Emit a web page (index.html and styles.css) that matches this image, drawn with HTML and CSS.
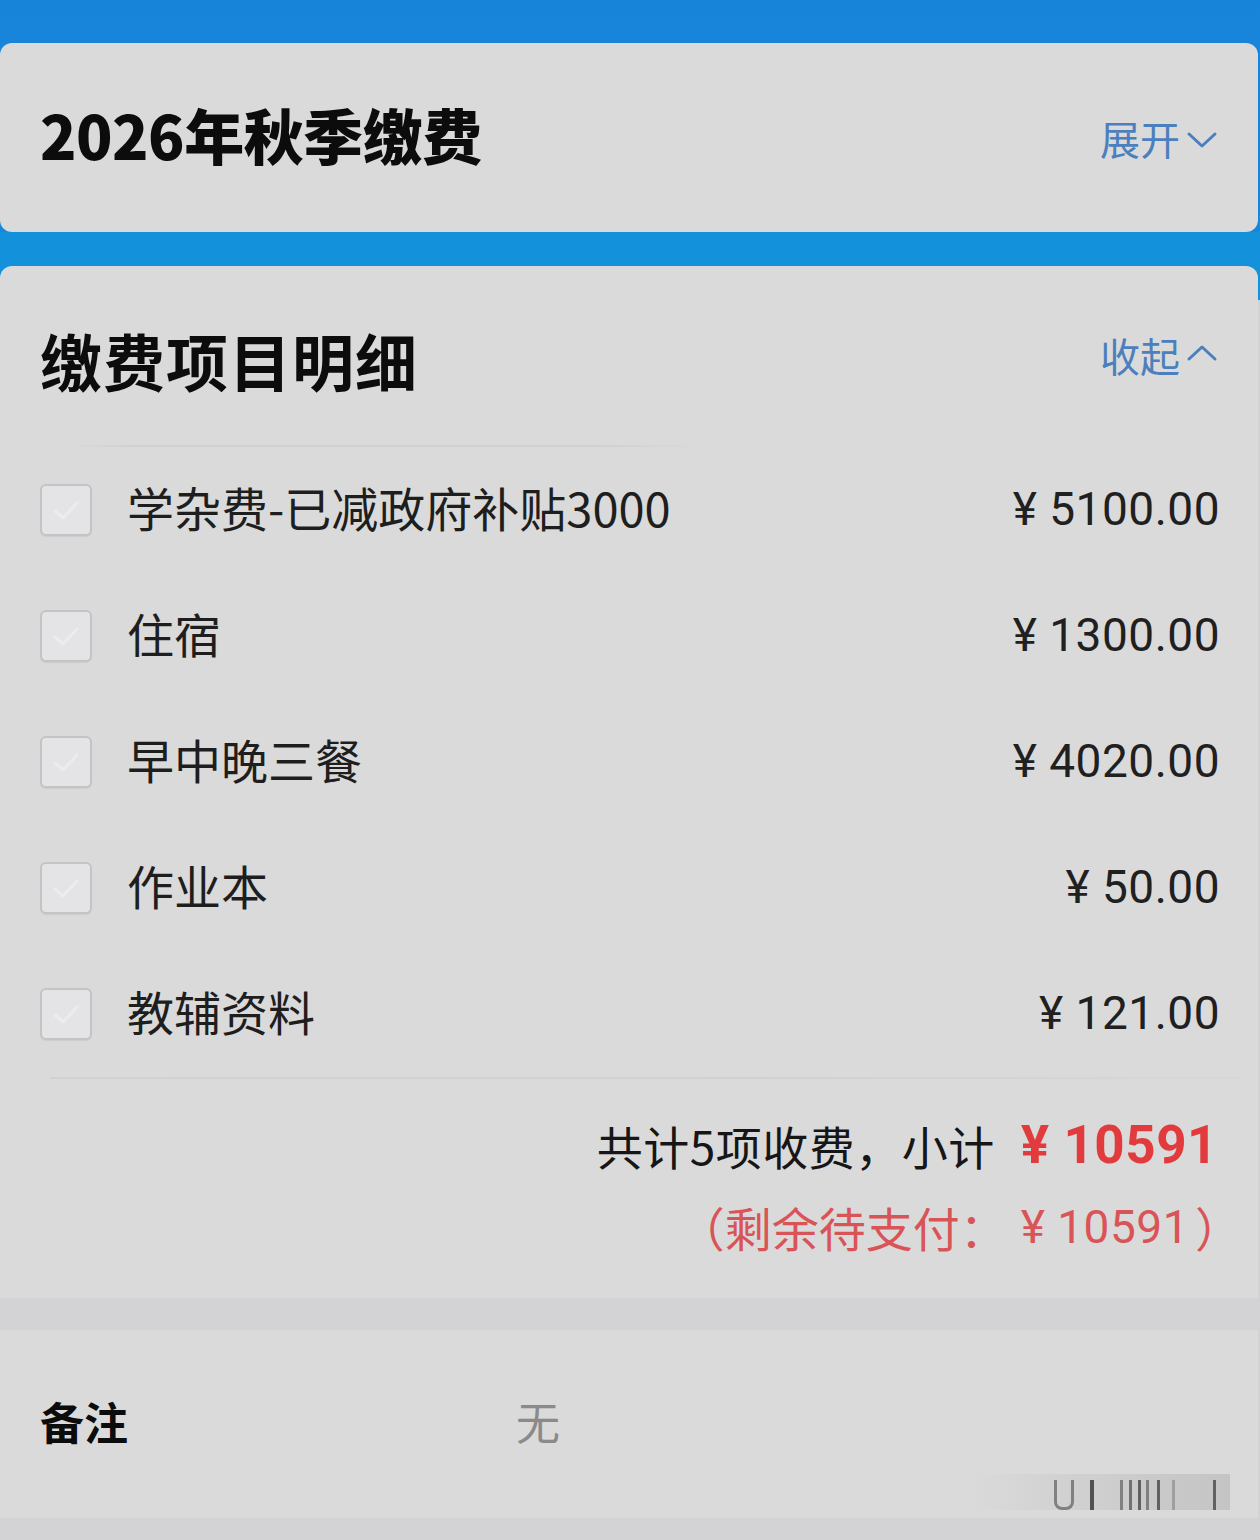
FILE: index.html
```html
<!DOCTYPE html>
<html lang="zh-CN">
<head>
<meta charset="utf-8">
<title>2026年秋季缴费</title>
<link rel="stylesheet" href="styles.css">
</head>
<body>
<div class="page">
  <section class="card card-head">
    <h1 class="title title-year">2026年秋季缴费</h1>
    <div class="toggle">展开<svg class="chev" viewBox="0 0 32 20" width="32" height="20"><path d="M3 4 L16 16 L29 4" fill="none" stroke="currentColor" stroke-width="3" stroke-linecap="round" stroke-linejoin="round"/></svg></div>
  </section>

  <section class="card card-detail">
    <div class="detail-head">
      <h2 class="title title-detail">缴费项目明细</h2>
      <div class="toggle toggle-up">收起<svg class="chev" viewBox="0 0 32 20" width="32" height="20"><path d="M3 16 L16 4 L29 16" fill="none" stroke="currentColor" stroke-width="3" stroke-linecap="round" stroke-linejoin="round"/></svg></div>
    </div>
    <div class="divider divider-top"></div>
    <ul class="items">
      <li class="item"><span class="check"><svg viewBox="0 0 52 52" width="52" height="52"><path d="M15 27 L23 34 L37 19" fill="none" stroke="#ececee" stroke-width="3" stroke-linecap="round" stroke-linejoin="round"/></svg></span><span class="name">学杂费-已减政府补贴3000</span><span class="amount">¥ 5100.00</span></li>
      <li class="item"><span class="check"><svg viewBox="0 0 52 52" width="52" height="52"><path d="M15 27 L23 34 L37 19" fill="none" stroke="#ececee" stroke-width="3" stroke-linecap="round" stroke-linejoin="round"/></svg></span><span class="name">住宿</span><span class="amount">¥ 1300.00</span></li>
      <li class="item"><span class="check"><svg viewBox="0 0 52 52" width="52" height="52"><path d="M15 27 L23 34 L37 19" fill="none" stroke="#ececee" stroke-width="3" stroke-linecap="round" stroke-linejoin="round"/></svg></span><span class="name">早中晚三餐</span><span class="amount">¥ 4020.00</span></li>
      <li class="item"><span class="check"><svg viewBox="0 0 52 52" width="52" height="52"><path d="M15 27 L23 34 L37 19" fill="none" stroke="#ececee" stroke-width="3" stroke-linecap="round" stroke-linejoin="round"/></svg></span><span class="name">作业本</span><span class="amount">¥ 50.00</span></li>
      <li class="item"><span class="check"><svg viewBox="0 0 52 52" width="52" height="52"><path d="M15 27 L23 34 L37 19" fill="none" stroke="#ececee" stroke-width="3" stroke-linecap="round" stroke-linejoin="round"/></svg></span><span class="name">教辅资料</span><span class="amount">¥ 121.00</span></li>
    </ul>
    <div class="divider divider-bottom"></div>
    <div class="totals">
      <div class="total-line">共计5项收费，小计<span class="total-sum">¥ 10591</span></div>
      <div class="remain">（剩余待支付：<span class="remain-num">¥ 10591</span>）</div>
    </div>
  </section>

  <section class="card card-note">
    <span class="note-label">备注</span>
    <span class="note-value">无</span>
    <div class="watermark" aria-hidden="true">
      <span class="wm-u"></span><span class="wm-bar b1"></span><span class="wm-bar b2"></span><span class="wm-bar b3"></span><span class="wm-bar b4"></span><span class="wm-bar b5"></span><span class="wm-bar b6"></span><span class="wm-bar b7"></span><span class="wm-bar b8"></span>
    </div>
  </section>
</div>
</body>
</html>
```

FILE: styles.css
```css
html, body {
  margin: 0;
  padding: 0;
}

body {
  width: 1260px;
  min-height: 1540px;
  background: linear-gradient(to bottom, #1784d9 0, #1787d9 232px, #1491db 232px, #1491db 300px, #d3d3d5 300px);
  font-family: "Noto Sans CJK SC", "Noto Sans", sans-serif;
  color: #1c1c1c;
}

.page {
  display: flex;
  flex-direction: column;
  width: 1258px;
  padding-top: 43px;
}

.card {
  background: #dadada;
  border-radius: 12px;
  box-sizing: border-box;
  padding: 0 40px;
}

.card-head {
  height: 189px;
  display: flex;
  align-items: center;
  justify-content: space-between;
}

.title {
  margin: 0;
  font-weight: 700;
  color: #0c0c0c;
}

.title-year {
  font-size: 60px;
  line-height: 70px;
  font-weight: 900;
  letter-spacing: -0.5px;
  margin-top: -8px;
}

.toggle {
  display: flex;
  align-items: center;
  gap: 6px;
  font-size: 40px;
  line-height: 50px;
  color: #4c7fbd;
}

.toggle .chev {
  width: 32px;
  height: 20px;
  margin-top: 4px;
}

.toggle-up .chev {
  margin-top: -4px;
}

.card-detail {
  margin-top: 34px;
  height: 1032px;
  border-radius: 12px 12px 0 0;
  display: flex;
  flex-direction: column;
}

.detail-head {
  height: 179px;
  display: flex;
  justify-content: space-between;
  align-items: flex-start;
  padding-top: 60px;
  box-sizing: border-box;
}

.title-detail {
  font-size: 62px;
  line-height: 68px;
  letter-spacing: 1px;
}

.detail-head .toggle {
  margin-top: 4px;
}

.divider {
  height: 2px;
  flex: none;
}

.divider-top {
  margin-left: 30px;
  width: 630px;
  background: linear-gradient(to right, rgba(200,200,200,0), #d0d0d0 10%, #d1d1d1 85%, rgba(200,200,200,0));
}

.divider-bottom {
  margin-left: 10px;
  margin-right: -20px;
  background: linear-gradient(to right, #d2d2d2, #d1d1d1 60%, rgba(210,210,210,0.4));
}

.items {
  list-style: none;
  margin: 0;
  padding: 0;
}

.item {
  height: 126px;
  display: flex;
  align-items: center;
}

.check {
  width: 52px;
  height: 52px;
  box-sizing: border-box;
  border: 2px solid #c4c4c6;
  border-radius: 6px;
  background: #e4e4e6;
  box-shadow: 0 1px 1px rgba(0,0,0,0.06);
  display: flex;
  align-items: center;
  justify-content: center;
  flex: none;
  overflow: hidden;
}

.check svg {
  width: 52px;
  height: 52px;
  flex: none;
}

.name {
  margin-left: 35px;
  margin-top: -7px;
  font-size: 47px;
  line-height: 56px;
  color: #1e1e1e;
  flex: 1;
}

.amount {
  font-family: Roboto, "Noto Sans", sans-serif;
  font-size: 46px;
  line-height: 56px;
  color: #202020;
  letter-spacing: 0.5px;
  margin-right: -2px;
  margin-top: -2px;
}

.totals {
  display: flex;
  flex-direction: column;
  align-items: flex-end;
  padding-top: 36px;
}

.total-line {
  font-size: 46px;
  line-height: 60px;
  color: #161616;
  display: flex;
  align-items: center;
  letter-spacing: 0.5px;
}

.total-sum {
  font-family: Roboto, "Noto Sans", sans-serif;
  font-weight: 700;
  font-size: 53px;
  color: #e23b3d;
  margin-left: 26px;
  letter-spacing: 0.5px;
}

.remain {
  margin-top: 22px;
  margin-right: -24px;
  font-size: 47px;
  line-height: 60px;
  color: #d95457;
  display: flex;
  align-items: center;
}

.remain-num {
  font-family: Roboto, "Noto Sans", sans-serif;
  font-size: 46px;
  letter-spacing: 0.5px;
  margin-left: 14px;
  margin-right: 6px;
}

.card-note {
  margin-top: 32px;
  height: 188px;
  border-radius: 0;
  display: flex;
  align-items: center;
  position: relative;
}

.note-label {
  font-size: 44px;
  font-weight: 700;
  color: #0c0c0c;
  width: 476px;
  line-height: 56px;
  margin-top: -6px;
}

.note-value {
  font-size: 44px;
  line-height: 56px;
  color: #8a8a8a;
  margin-top: -6px;
}

.watermark {
  position: absolute;
  right: 28px;
  bottom: 8px;
  width: 260px;
  height: 36px;
  display: flex;
  align-items: flex-end;
  background: linear-gradient(to right, rgba(200,200,200,0), rgba(190,190,190,0.35) 40%, rgba(170,170,170,0.5));
  opacity: 0.9;
}

.wm-u {
  margin-left: 84px;
  width: 20px;
  height: 30px;
  border: 3px solid #777;
  border-top: none;
  border-radius: 0 0 8px 8px;
  box-sizing: border-box;
}

.wm-bar {
  width: 3px;
  height: 30px;
  background: #555;
}

.b1 { margin-left: 16px; width: 4px; background: #444; }
.b2 { margin-left: 26px; background: #777; }
.b3 { margin-left: 6px; background: #666; }
.b4 { margin-left: 6px; background: #555; }
.b5 { margin-left: 5px; background: #777; }
.b6 { margin-left: 8px; background: #555; }
.b7 { margin-left: 12px; background: #999; }
.b8 { margin-left: 38px; background: #555; }
```
